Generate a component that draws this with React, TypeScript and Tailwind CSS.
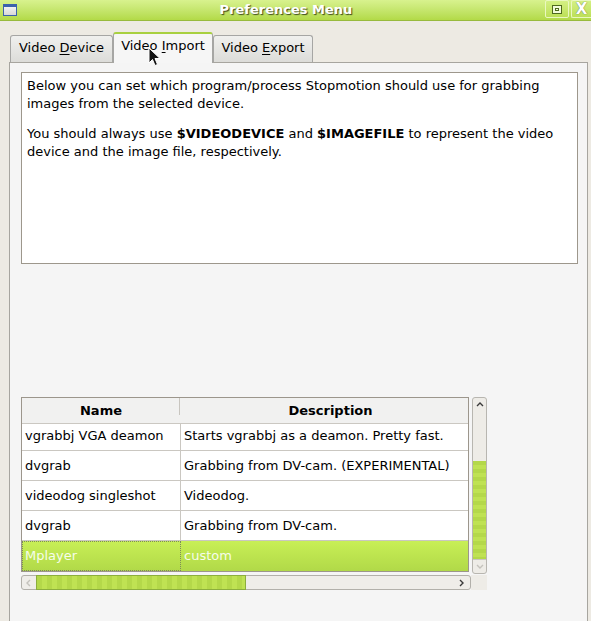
import React from "react";

const rows = [
  { name: "vgrabbj VGA deamon", desc: "Starts vgrabbj as a deamon. Pretty fast." },
  { name: "dvgrab", desc: "Grabbing from DV-cam. (EXPERIMENTAL)" },
  { name: "videodog singleshot", desc: "Videodog." },
  { name: "dvgrab", desc: "Grabbing from DV-cam." },
];

function Chevron({ dir, light }: { dir: "up" | "down" | "left" | "right"; light?: boolean }) {
  const pts = {
    up: "1,5 4,2 7,5",
    down: "1,2 4,5 7,2",
    left: "5,1 2,4 5,7",
    right: "2,1 5,4 2,7",
  }[dir];
  return (
    <svg width="8" height="8" viewBox="0 0 8 8">
      <polyline points={pts} fill="none" stroke={light ? "#c4c2bc" : "#3a3a3a"} strokeWidth="1.4" />
    </svg>
  );
}

function Tab({ label, mn, rest, active }: { label: string; mn: string; rest: string; active?: boolean }) {
  if (active) {
    return (
      <div className="relative z-10 -mb-px flex h-[31px] w-[100px] items-start justify-center rounded-t-[3px] border-x border-t-2 border-x-[#a6a6a4] border-t-[#a8d040] bg-[#f6f6f6] pt-[2px]">
        <span>
          {label}
          <span className="underline underline-offset-2">{mn}</span>
          {rest}
        </span>
      </div>
    );
  }
  return (
    <div className="flex h-[27px] items-start justify-center rounded-t-[3px] border border-b-0 border-[#a6a6a4] bg-gradient-to-b from-[#f0f0ee] to-[#dcdcd9] pt-[2px]">
      <span>
        {label}
        <span className="underline underline-offset-2">{mn}</span>
        {rest}
      </span>
    </div>
  );
}

export default function App() {
  return (
    <div className="relative h-[621px] w-[591px] overflow-hidden bg-[#edeae3] font-['DejaVu_Sans',sans-serif] text-[13px] text-black">
      {/* title bar */}
      <div className="flex h-[21px] items-start border-b border-[#98ba3d] bg-gradient-to-b from-[#d8f28e] to-[#b3da47]">
        <div className="ml-[3px] mt-[4px] h-[12px] w-[14px] border border-t-[3px] border-[#3c62ac] bg-gradient-to-b from-[#f2f2f2] to-[#d8d8d8]" />
        <div className="flex-1 pl-[10px] pt-[1px] text-center font-bold leading-[17px] text-white [text-shadow:1px_1px_1px_#3d4a1c]">
          Preferences Menu
        </div>
        <div className="flex h-[18px] w-[24px] items-center justify-center rounded-[2px] border border-[#eaf8c0] bg-gradient-to-b from-[#d4f083] to-[#bde057]">
          <div className="flex h-[9px] w-[10px] items-center justify-center border border-[#4f6a1e] bg-[#f2fbd8]">
            <div className="h-[3px] w-[4px] border border-[#4f6a1e]" />
          </div>
        </div>
        <div className="ml-[2px] flex h-[18px] w-[20px] items-center justify-center rounded-l-[2px] border border-r-0 border-[#eaf8c0] bg-gradient-to-b from-[#d4f083] to-[#bde057] text-[15px] font-bold leading-none text-white [text-shadow:0_0_1px_#3d4a1c]">
          X
        </div>
      </div>

      {/* tabs */}
      <div className="mt-[11px] flex items-end pl-[10px]">
        <div className="w-[103px]">
          <Tab label="Video " mn="D" rest="evice" />
        </div>
        <Tab label="Video " mn="I" rest="mport" active />
        <div className="w-[100px]">
          <Tab label="Video " mn="E" rest="xport" />
        </div>
      </div>

      {/* panel */}
      <div className="ml-[9px] h-[600px] w-[579px] border border-[#a7a59f] bg-[#f5f5f5] pl-[11px] pt-[9px]">
        <div className="h-[192px] w-[557px] border border-[#9d978c] bg-white px-[5px] pt-[4px] leading-[18px]">
          <p>Below you can set which program/process Stopmotion should use for grabbing images from the selected device.</p>
          <p className="mt-[12px]">
            You should always use <b>$VIDEODEVICE</b> and <b>$IMAGEFILE</b> to represent the video device and the image file,
            respectively.
          </p>
        </div>

        <div className="mt-[133px] flex gap-[3px]">
          {/* tree */}
          <div className="h-[175px] w-[448px] overflow-hidden border border-[#9c968c] bg-white">
            <div className="flex h-[26px] w-[460px] items-center border-b border-[#cbc8c2] bg-[#f1f1f0] font-bold">
              <div className="relative w-[158px] text-center">
                Name
                <div className="absolute right-0 top-[-4px] h-[18px] w-px bg-[#c8c5bf]" />
              </div>
              <div className="w-[300px] pl-[1px] text-center">Description</div>
            </div>
            <div className="overflow-hidden">
              {rows.map((r, i) => (
                <div key={i} className={`flex h-[30px] border-b border-[#cac7c1] ${i === 0 ? "-mt-[3px]" : ""}`}>
                  <div className="flex w-[159px] items-center border-r border-[#cac7c1] pl-[3px]">{r.name}</div>
                  <div className="flex items-center whitespace-nowrap pl-[3px]">{r.desc}</div>
                </div>
              ))}
              <div className="flex h-[30px] bg-gradient-to-b from-[#c8ef56] to-[#b1d948] text-[#f6fdea]">
                <div className="flex w-[159px] items-center border border-dotted border-[#7d8a5a] pl-[2px]">Mplayer</div>
                <div className="flex items-center pl-[3px]">custom</div>
              </div>
            </div>
          </div>

          {/* vertical scrollbar */}
          <div className="flex h-[177px] w-[15px] flex-col rounded-[3px] border border-[#b8b6b0] bg-[#eeece7]">
            <div className="flex h-[13px] items-center justify-center">
              <Chevron dir="up" />
            </div>
            <div className="mt-[50px] h-[98px] bg-[repeating-linear-gradient(180deg,#b4d84a_0px,#b4d84a_4px,#bfe253_4px,#bfe253_8px)]" />
            <div className="flex flex-1 items-center justify-center border-t border-[#c8c6c0]">
              <Chevron dir="down" light />
            </div>
          </div>
        </div>

        <div className="mt-px flex">
          {/* horizontal scrollbar */}
          <div className="flex h-[15px] w-[450px] items-center rounded-[3px] border border-[#b2b0aa] bg-[#efede9]">
            <div className="flex w-[14px] justify-center">
              <Chevron dir="left" light />
            </div>
            <div className="h-[15px] w-[210px] border border-[#8cae3d] bg-[repeating-linear-gradient(90deg,#b4d84a_0px,#b4d84a_5px,#bfe253_5px,#bfe253_10px)]" />
            <div className="flex flex-1 justify-end pr-[4px]">
              <Chevron dir="right" />
            </div>
          </div>
          <div className="h-[15px] w-[16px] bg-[#eeece7]" />
        </div>
      </div>

      {/* mouse cursor */}
      <svg className="absolute left-[148px] top-[47px] z-20" width="14" height="21" viewBox="0 0 14 21">
        <path d="M1,1 L1,16 L4.5,12.5 L7,18.5 L9.5,17.5 L7,11.5 L12,11.5 Z" fill="#111" stroke="#fff" strokeWidth="1" strokeLinejoin="round" />
      </svg>
    </div>
  );
}
